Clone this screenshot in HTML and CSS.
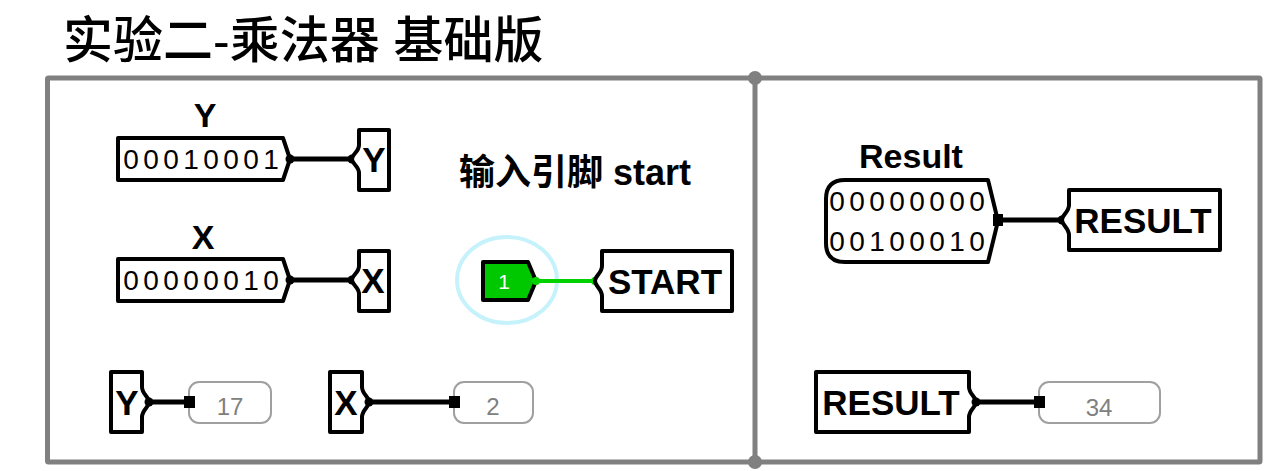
FILE: index.html
```html
<!DOCTYPE html>
<html lang="zh">
<head>
<meta charset="utf-8">
<title>实验二-乘法器 基础版</title>
<link rel="stylesheet" href="styles.css">
</head>
<body>
<h1 class="title">实验二-乘法器 基础版</h1>
<svg class="board" width="1280" height="401" viewBox="0 70 1280 401" xmlns="http://www.w3.org/2000/svg">
  <!-- frame -->
  <rect class="frame" x="47.5" y="78" width="1212.5" height="384" rx="1"/>
  <line class="frame" x1="755" y1="78" x2="755" y2="462"/>
  <circle class="frame-dot" cx="755" cy="78" r="7"/>
  <circle class="frame-dot" cx="755" cy="462" r="7"/>

  <!-- Y input pin -->
  <text class="label" x="205" y="127">Y</text>
  <path class="comp" d="M118 138 H283 L290 159 L283 180 H118 Z"/>
  <text class="digits" x="131 151 171 191 211 231 251 271" y="169">00010001</text>
  <line class="wire" x1="290" y1="159" x2="352" y2="159"/>
  <circle class="dot" cx="290" cy="159" r="4.5"/>
  <circle class="dot" cx="352" cy="159" r="4.5"/>
  <path class="comp" d="M389 130 H359 V145 C359 152 352 154 352 159 C352 164 359 166 359 173 V190 H389 Z"/>
  <text class="tun" x="374" y="172">Y</text>

  <!-- X input pin -->
  <text class="label" x="203" y="249">X</text>
  <path class="comp" d="M118 259 H283 L290 280 L283 301 H118 Z"/>
  <text class="digits" x="131 151 171 191 211 231 251 271" y="290">00000010</text>
  <line class="wire" x1="290" y1="280" x2="352" y2="280"/>
  <circle class="dot" cx="290" cy="280" r="4.5"/>
  <circle class="dot" cx="352" cy="280" r="4.5"/>
  <path class="comp" d="M389 251 H359 V266 C359 273 352 275 352 280 C352 285 359 287 359 294 V311 H389 Z"/>
  <text class="tun" x="373" y="293">X</text>

  <!-- start pin -->
  <text class="note" x="459" y="185">输入引脚 start</text>
  <ellipse class="select" cx="507" cy="280" rx="50" ry="43"/>
  <path class="pin-on" d="M483 262 H528 L536 281 L528 300 H483 Z"/>
  <text class="pin-val" x="504" y="289">1</text>
  <line class="wire-on" x1="536" y1="281" x2="595" y2="281"/>
  <circle class="dot-on" cx="536" cy="281" r="4"/>
  <circle class="dot-on" cx="595" cy="281" r="4"/>
  <path class="comp" d="M732 251 H602 V266 C602 273 595 276 595 281 C595 286 602 289 602 296 V311 H732 Z"/>
  <text class="tun" x="665" y="294">START</text>

  <!-- bottom left probes -->
  <path class="comp" d="M111 372 H142 V387 C142 394 149 397 149 402 C149 407 142 410 142 417 V432 H111 Z"/>
  <text class="tun" x="127" y="415">Y</text>
  <line class="wire" x1="149" y1="402" x2="190" y2="402"/>
  <circle class="dot" cx="149" cy="402" r="4.5"/>
  <rect class="probe" x="189" y="382" width="82" height="41" rx="10"/>
  <rect class="sq" x="184" y="396" width="11" height="12"/>
  <text class="probe-val" x="230" y="415">17</text>

  <path class="comp" d="M330 372 H362 V387 C362 394 369 397 369 402 C369 407 362 410 362 417 V432 H330 Z"/>
  <text class="tun" x="346" y="415">X</text>
  <line class="wire" x1="369" y1="402" x2="455" y2="402"/>
  <circle class="dot" cx="369" cy="402" r="4.5"/>
  <rect class="probe" x="454" y="382" width="79" height="41" rx="10"/>
  <rect class="sq" x="449" y="396" width="11" height="12"/>
  <text class="probe-val" x="493" y="415">2</text>

  <!-- Result output pin -->
  <text class="label" x="911" y="168">Result</text>
  <path class="comp" d="M845 180 H988 L998 221 L988 262 H845 Q826 262 826 243 V199 Q826 180 845 180 Z"/>
  <text class="digits" x="837 857 877 897 917 937 957 977" y="211">00000000</text>
  <text class="digits" x="837 857 877 897 917 937 957 977" y="251">00100010</text>
  <line class="wire" x1="998" y1="220" x2="1062" y2="220"/>
  <rect class="sq" x="993" y="214" width="10" height="12"/>
  <circle class="dot" cx="1062" cy="220" r="4.5"/>
  <path class="comp" d="M1220 190 H1069 V205 C1069 212 1062 215 1062 220 C1062 225 1069 228 1069 235 V250 H1220 Z"/>
  <text class="tun" x="1143" y="233">RESULT</text>

  <!-- bottom right probe -->
  <path class="comp" d="M816 372 H969 V387 C969 394 976 397 976 402 C976 407 969 410 969 417 V432 H816 Z"/>
  <text class="tun" x="891" y="415">RESULT</text>
  <line class="wire" x1="976" y1="402" x2="1040" y2="402"/>
  <circle class="dot" cx="976" cy="402" r="4.5"/>
  <rect class="probe" x="1039" y="382" width="121" height="41" rx="10"/>
  <rect class="sq" x="1034" y="396" width="11" height="12"/>
  <text class="probe-val" x="1099" y="416">34</text>
</svg>
</body>
</html>
```
FILE: styles.css
```css
html, body {
  margin: 0;
  padding: 0;
  background: #ffffff;
}

body {
  width: 1280px;
  height: 471px;
  overflow: hidden;
  font-family: "Liberation Sans", "Noto Sans CJK SC", sans-serif;
}

.title {
  margin: 0;
  height: 59px;
  padding: 11px 0 0 63px;
  font-family: "Liberation Sans", "Noto Sans CJK SC", sans-serif;
  font-size: 50px;
  font-weight: 500;
  line-height: 60px;
  color: #000000;
  white-space: nowrap;
}

.board {
  display: block;
}

.frame {
  fill: none;
  stroke: #808080;
  stroke-width: 5;
}

.frame-dot {
  fill: #808080;
}

.comp {
  fill: #ffffff;
  stroke: #000000;
  stroke-width: 4;
  stroke-linejoin: round;
}

.wire {
  stroke: #000000;
  stroke-width: 5;
}

.dot {
  fill: #000000;
}

.sq {
  fill: #000000;
}

.wire-on {
  stroke: #00d200;
  stroke-width: 4;
}

.dot-on {
  fill: #00d200;
}

.pin-on {
  fill: #00c800;
  stroke: #000000;
  stroke-width: 4;
  stroke-linejoin: round;
}

.pin-val {
  font-family: "Liberation Sans", sans-serif;
  font-size: 21px;
  fill: #ffffff;
  text-anchor: middle;
}

.select {
  fill: none;
  stroke: #c6f2fb;
  stroke-width: 4;
}

.label,
.tun {
  font-family: "Liberation Sans", sans-serif;
  font-weight: 700;
  font-size: 35px;
  fill: #000000;
  text-anchor: middle;
}

.label {
  font-size: 34px;
}

.digits {
  font-family: "Liberation Sans", sans-serif;
  font-size: 28px;
  fill: #000000;
  text-anchor: middle;
}

.note {
  font-family: "Liberation Sans", "Noto Sans CJK SC", sans-serif;
  font-weight: 700;
  font-size: 36px;
  fill: #000000;
}

.probe {
  fill: #ffffff;
  stroke: #a0a0a0;
  stroke-width: 2;
}

.probe-val {
  font-family: "Liberation Sans", sans-serif;
  font-size: 24px;
  fill: #808080;
  text-anchor: middle;
}
```
